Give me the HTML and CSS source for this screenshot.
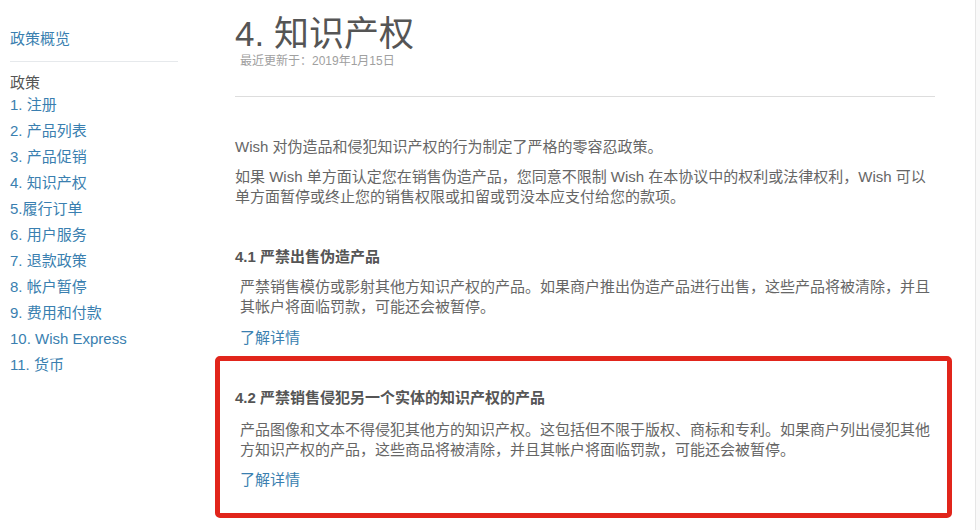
FILE: index.html
```html
<!DOCTYPE html>
<html lang="zh-CN">
<head>
<meta charset="utf-8">
<title>4. 知识产权</title>
<link rel="stylesheet" href="styles.css">
</head>
<body>
<div class="page">
  <nav class="sidebar">
    <a class="overview" href="#">政策概览</a>
    <div class="side-rule"></div>
    <div class="side-title">政策</div>
    <ul class="side-list">
      <li><a href="#">1. 注册</a></li>
      <li><a href="#">2. 产品列表</a></li>
      <li><a href="#">3. 产品促销</a></li>
      <li><a href="#">4. 知识产权</a></li>
      <li><a href="#">5.履行订单</a></li>
      <li><a href="#">6. 用户服务</a></li>
      <li><a href="#">7. 退款政策</a></li>
      <li><a href="#">8. 帐户暂停</a></li>
      <li><a href="#">9. 费用和付款</a></li>
      <li><a href="#">10. Wish Express</a></li>
      <li><a href="#">11. 货币</a></li>
    </ul>
  </nav>
  <main class="main">
    <h1 class="title">4. 知识产权</h1>
    <div class="updated">最近更新于：2019年1月15日</div>
    <div class="rule"></div>
    <p class="intro first">Wish 对伪造品和侵犯知识产权的行为制定了严格的零容忍政策。</p>
    <p class="intro">如果 Wish 单方面认定您在销售伪造产品，您同意不限制 Wish 在本协议中的权利或法律权利，Wish 可以单方面暂停或终止您的销售权限或扣留或罚没本应支付给您的款项。</p>
    <section class="section">
      <h2 class="sec-title">4.1 严禁出售伪造产品</h2>
      <p class="sec-body">严禁销售模仿或影射其他方知识产权的产品。如果商户推出伪造产品进行出售，这些产品将被清除，并且其帐户将面临罚款，可能还会被暂停。</p>
      <a class="more" href="#">了解详情</a>
    </section>
    <section class="section highlight">
      <h2 class="sec-title">4.2 严禁销售侵犯另一个实体的知识产权的产品</h2>
      <p class="sec-body">产品图像和文本不得侵犯其他方的知识产权。这包括但不限于版权、商标和专利。如果商户列出侵犯其他方知识产权的产品，这些商品将被清除，并且其帐户将面临罚款，可能还会被暂停。</p>
      <a class="more" href="#">了解详情</a>
    </section>
  </main>
  <div class="spacer"></div>
  <div class="gutter"></div>
</div>
</body>
</html>
```
FILE: styles.css
```css
html, body {
  margin: 0;
  padding: 0;
  background: #ffffff;
}
body {
  font-family: "Liberation Sans", "Noto Sans CJK SC", sans-serif;
  font-size: 15px;
  color: #666666;
}
.page {
  display: flex;
  width: 980px;
  height: 530px;
  overflow: hidden;
}
a {
  color: #3a7fb0;
  text-decoration: none;
}
.sidebar {
  width: 168px;
  padding: 29px 57px 0 10px;
  flex: none;
}
.overview {
  display: block;
  line-height: 20px;
}
.side-rule {
  height: 1px;
  background: #e6e9ec;
  margin-top: 12px;
}
.side-title {
  margin-top: 11px;
  line-height: 20px;
  color: #555555;
}
.side-list {
  list-style: none;
  margin: -1px 0 0 0;
  padding: 0;
}
.side-list li {
  line-height: 26px;
}
.main {
  width: 700px;
  flex: none;
}
.title {
  margin: 15px 0 0 0;
  font-size: 35px;
  font-weight: normal;
  line-height: 38px;
  color: #555555;
}
.updated {
  margin-left: 5px;
  font-size: 12px;
  line-height: 16px;
  color: #a0a0a0;
}
.rule {
  height: 1px;
  background: #dddddd;
  margin-top: 27px;
}
.intro {
  margin: 10px 0 0 0;
  line-height: 20px;
}
.intro.first {
  margin-top: 40px;
}
.section {
  margin-top: 40px;
}
.sec-title {
  margin: 0;
  font-size: 15px;
  font-weight: bold;
  line-height: 20px;
  color: #555555;
}
.sec-body {
  margin: 10px 0 0 0;
  padding-left: 5px;
  line-height: 20px;
}
.more {
  display: block;
  margin: 11px 0 0 5px;
  line-height: 20px;
}
.highlight {
  margin: 8px -17px 0 -20px;
  padding: 27px 12px 23px 15px;
  border: 5px solid #e1251b;
  border-radius: 5px;
}
.highlight .sec-body {
  margin-top: 12px;
}
.highlight .more {
  margin-top: 10px;
}
.spacer {
  flex: 1;
}
.gutter {
  width: 4px;
  flex: none;
  border-left: 1px solid #e6e6e6;
  background: #f9f9f9;
}
```
